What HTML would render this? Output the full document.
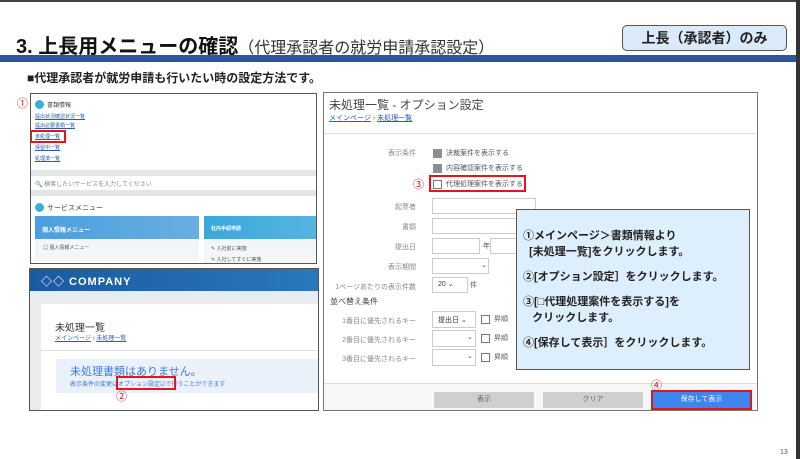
<!DOCTYPE html>
<html><head><meta charset="utf-8">
<style>
*{margin:0;padding:0;box-sizing:border-box}
body{width:800px;height:459px;position:relative;overflow:hidden;background:#fff;font-family:"Liberation Sans","Noto Sans CJK JP",sans-serif;color:#222}
.a{position:absolute;white-space:nowrap}
.lnk{color:#2a5db0;text-decoration:underline}
.red{border:2px solid #e8141b}
.rn{color:#e8141b}
.lab{position:absolute;font-size:7px;color:#888;text-align:right;width:120px}
.cb{position:absolute;width:9px;height:9px;border:1px solid #777;background:#fff}
.cbc{background:#8a8f95;border-color:#8a8f95}
.inp{position:absolute;border:1px solid #ccc;background:#fff}
.chev{position:absolute;font-size:7px;color:#555}
.txt{position:absolute;font-size:7px;color:#555;white-space:nowrap}
</style></head><body>
<div class="a" style="left:0;top:0;width:800px;height:2px;background:#444"></div>
<div class="a" style="left:796px;top:0;width:4px;height:459px;background:#333"></div>

<div class="a" style="left:16px;top:30px;font-size:20px;font-weight:bold;color:#111">3. 上長用メニューの確認<span style="font-weight:normal;font-size:16px;color:#333">（代理承認者の就労申請承認設定）</span></div>
<div class="a" style="left:622px;top:25px;width:165px;height:26px;border:1px solid #555;border-radius:5px;background:#dbeaf9;font-size:14px;font-weight:bold;text-align:center;line-height:24px">上長（承認者）のみ</div>
<div class="a" style="left:0;top:55px;width:796px;height:7px;background:#2f5596"></div>

<div class="a" style="left:27px;top:69px;font-size:12px;font-weight:bold">■代理承認者が就労申請も行いたい時の設定方法です。</div>

<!-- panel 1 -->
<div class="a" style="left:30px;top:93px;width:287px;height:171px;border:1px solid #555;background:#fff;overflow:hidden">
  <div class="a" style="left:4px;top:6px;width:9px;height:9px;border-radius:50%;background:#3ab0d8"></div>
  <div class="a" style="left:16px;top:6px;font-size:6px;color:#444">書類情報</div>
  <div class="a lnk" style="left:4px;top:19px;font-size:5px">提出状況確認状況一覧</div>
  <div class="a lnk" style="left:4px;top:28px;font-size:5px">提出必要書類一覧</div>
  <div class="a lnk" style="left:4px;top:39px;font-size:5px">未処理一覧</div>
  <div class="a lnk" style="left:4px;top:50px;font-size:5px">保留中一覧</div>
  <div class="a lnk" style="left:4px;top:61px;font-size:5px">処理済一覧</div>
  <div class="a red" style="left:-1px;top:36px;width:36px;height:13px"></div>
  <div class="a" style="left:0;top:76px;width:287px;height:6px;background:#e4e5e7"></div>
  <div class="a" style="left:4px;top:85px;font-size:6px;color:#888">🔍 検索したいサービスを入力してください</div>
  <div class="a" style="left:0;top:96px;width:287px;height:6px;background:#e4e5e7"></div>
  <div class="a" style="left:4px;top:109px;width:9px;height:9px;border-radius:50%;background:#3ab0d8"></div>
  <div class="a" style="left:16px;top:109px;font-size:7px;color:#444">サービスメニュー</div>
  <div class="a" style="left:4px;top:122px;width:164px;height:23px;background:linear-gradient(90deg,#4a9fe0,#6aaee0)"></div>
  <div class="a" style="left:11px;top:131px;font-size:6px;color:#fff;font-weight:bold">個人情報メニュー</div>
  <div class="a" style="left:4px;top:145px;width:164px;height:22px;background:#f4f5f6"></div>
  <div class="a" style="left:12px;top:150px;font-size:5px;color:#555">▤ 個人情報メニュー</div>
  <div class="a" style="left:173px;top:122px;width:114px;height:23px;background:linear-gradient(90deg,#3aa8dc,#55b5e0)"></div>
  <div class="a" style="left:180px;top:131px;font-size:5px;color:#fff;font-weight:bold">社内手続申請</div>
  <div class="a" style="left:173px;top:145px;width:114px;height:26px;background:#f4f5f6"></div>
  <div class="a" style="left:180px;top:151px;font-size:5px;color:#555">✎ 入社前に実施</div>
  <div class="a" style="left:180px;top:162px;font-size:5px;color:#555">✎ 入社してすぐに実施</div>
</div>
<div class="a rn" style="left:17px;top:95px;font-size:11px">①</div>

<!-- panel 2 -->
<div class="a" style="left:29px;top:268px;width:290px;height:143px;border:1px solid #555;background:#e9ebee;overflow:hidden">
  <div class="a" style="left:0;top:0;width:290px;height:22px;background:linear-gradient(90deg,#1a5aa0,#2a78bc)"></div>
  <div class="a" style="left:11px;top:4px;font-size:11px;color:#fff;font-weight:bold;letter-spacing:1px">◇◇ COMPANY</div>
  <div class="a" style="left:11px;top:35px;width:279px;height:110px;background:#fff"></div>
  <div class="a" style="left:25px;top:50px;font-size:10px;color:#333">未処理一覧</div>
  <div class="a" style="left:25px;top:64px;font-size:6px"><span class="lnk">メインページ</span> <span style="color:#666">›</span> <span class="lnk">未処理一覧</span></div>
  <div class="a" style="left:11px;top:81px;width:279px;height:1px;background:#e0e0e0"></div>
  <div class="a" style="left:26px;top:90px;width:264px;height:34px;background:#eaf1fb"></div>
  <div class="a" style="left:40px;top:94px;font-size:11px;color:#3a7bd5">未処理書類はありません。</div>
  <div class="a" style="left:40px;top:110px;font-size:6px;color:#3a7bd5">表示条件の変更はオプション設定☑で行うことができます</div>
</div>
<div class="a red" style="left:116px;top:376px;width:60px;height:14px"></div>
<div class="a rn" style="left:116px;top:388px;font-size:11px">②</div>

<!-- right panel -->
<div class="a" style="left:323px;top:92px;width:435px;height:319px;border:1px solid #777;background:#fff;overflow:hidden">
  <div class="a" style="left:5px;top:3px;font-size:12px;color:#444">未処理一覧 - オプション設定</div>
  <div class="a" style="left:5px;top:20px;font-size:7px"><span class="lnk">メインページ</span> <span style="color:#666">›</span> <span class="lnk">未処理一覧</span></div>
  <div class="a" style="left:0;top:40px;width:435px;height:1px;background:#ddd"></div>
  <div class="a" style="left:0;top:290px;width:435px;height:1px;background:#ddd"></div>
  <div class="a" style="left:0;top:291px;width:435px;height:28px;background:#f7f7f7"></div>
</div>
<div style="position:absolute;left:0;top:0">
  <div class="lab" style="left:296px;top:148px">表示条件</div>
  <div class="cb cbc" style="left:433px;top:149px"></div><div class="txt" style="left:446px;top:148px">決裁案件を表示する</div>
  <div class="cb cbc" style="left:433px;top:164px"></div><div class="txt" style="left:446px;top:163px">内容確認案件を表示する</div>
  <div class="cb" style="left:433px;top:180px"></div><div class="txt" style="left:446px;top:179px">代理処理案件を表示する</div>
  <div class="a red" style="left:429px;top:175px;width:97px;height:17px"></div>
  <div class="a rn" style="left:413px;top:176px;font-size:11px">③</div>

  <div class="lab" style="left:296px;top:202px">起票者</div><div class="inp" style="left:432px;top:198px;width:104px;height:16px"></div>
  <div class="lab" style="left:296px;top:222px">書類</div><div class="inp" style="left:432px;top:218px;width:104px;height:16px"></div>
  <div class="lab" style="left:296px;top:242px">提出日</div><div class="inp" style="left:432px;top:238px;width:48px;height:16px"></div>
  <div class="txt" style="left:483px;top:241px">年</div><div class="inp" style="left:490px;top:238px;width:30px;height:16px"></div>
  <div class="lab" style="left:296px;top:262px">表示期間</div><div class="inp" style="left:432px;top:258px;width:57px;height:16px"></div><div class="chev" style="left:481px;top:261px">⌄</div>
  <div class="lab" style="left:296px;top:282px">1ページあたりの表示件数</div><div class="inp" style="left:432px;top:277px;width:36px;height:16px"></div>
  <div class="txt" style="left:438px;top:280px;color:#333">20 ⌄</div><div class="txt" style="left:470px;top:280px">件</div>
  <div class="txt" style="left:330px;top:296px;font-size:8px;color:#444">並べ替え条件</div>
  <div class="lab" style="left:296px;top:316px">1番目に優先されるキー</div><div class="inp" style="left:432px;top:311px;width:44px;height:17px"></div><div class="txt" style="left:438px;top:315px;color:#333">提出日 ⌄</div>
  <div class="lab" style="left:296px;top:335px">2番目に優先されるキー</div><div class="inp" style="left:432px;top:330px;width:44px;height:17px"></div><div class="chev" style="left:467px;top:333px">⌄</div>
  <div class="lab" style="left:296px;top:354px">3番目に優先されるキー</div><div class="inp" style="left:432px;top:349px;width:44px;height:17px"></div><div class="chev" style="left:467px;top:352px">⌄</div>
  <div class="cb" style="left:481px;top:315px"></div><div class="txt" style="left:494px;top:314px">昇順</div>
  <div class="cb" style="left:481px;top:334px"></div><div class="txt" style="left:494px;top:333px">昇順</div>
  <div class="cb" style="left:481px;top:353px"></div><div class="txt" style="left:494px;top:352px">昇順</div>
</div>

<!-- note -->
<div class="a" style="left:516px;top:209px;width:234px;height:161px;border:1px solid #555;background:#ddeefc;font-size:11px;font-weight:bold;color:#222;line-height:16px;padding:18px 0 0 6px;white-space:normal">
①メインページ＞書類情報より<br>&nbsp;&nbsp;[未処理一覧]をクリックします。<br><div style="height:9px"></div>②[オプション設定］をクリックします。<br><div style="height:9px"></div>③[□代理処理案件を表示する]を<br>&nbsp;&nbsp;&nbsp;クリックします。<br><div style="height:9px"></div>④[保存して表示］をクリックします。
</div>

<!-- buttons -->
<div class="a" style="left:434px;top:392px;width:100px;height:16px;background:#cdd0d3;font-size:7px;color:#666;text-align:center;line-height:16px">表示</div>
<div class="a" style="left:543px;top:392px;width:100px;height:16px;background:#cdd0d3;font-size:7px;color:#666;text-align:center;line-height:16px">クリア</div>
<div class="a red" style="left:651px;top:390px;width:101px;height:20px;background:#3d86ee;font-size:7px;color:#fff;text-align:center;line-height:16px">保存して表示</div>
<div class="a rn" style="left:651px;top:377px;font-size:11px">④</div>

<div class="a" style="left:780px;top:449px;font-size:7px;color:#555">13</div>
</body></html>
